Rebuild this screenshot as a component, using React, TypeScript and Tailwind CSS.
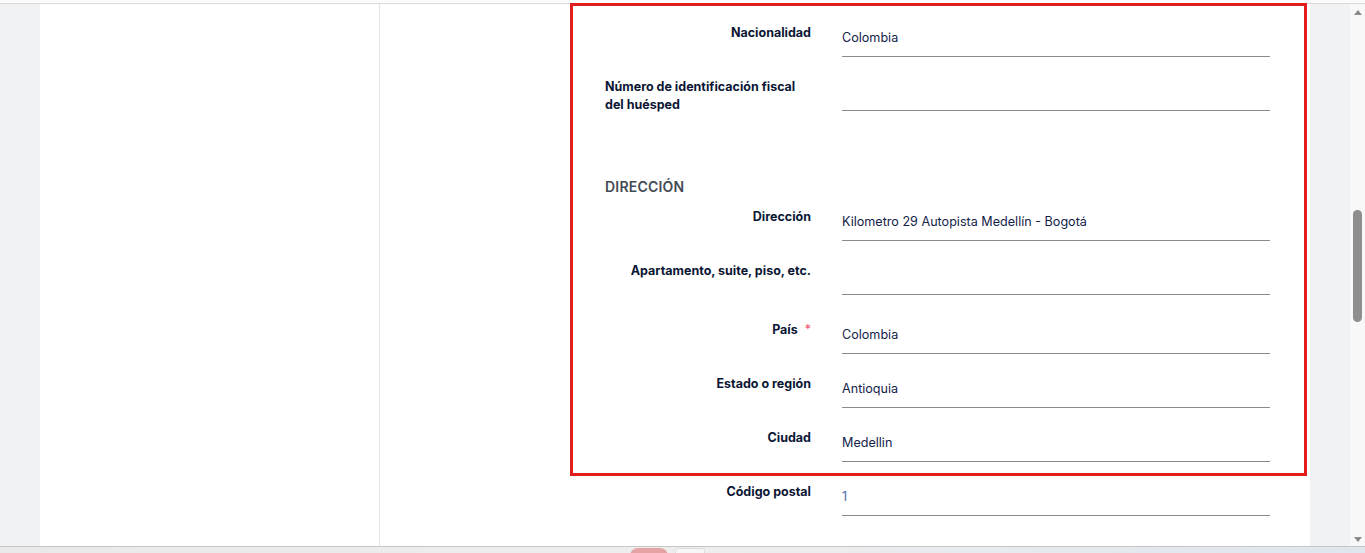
import React from "react";

const labelCls =
  "w-[206px] shrink-0 text-right text-[12.5px] leading-[18px] font-bold text-[#0b1635] pt-[3px]";
const inputCls =
  "w-[428px] h-[36px] border-b border-[#8a8a8a] flex items-center text-[12.6px] text-[#14234a]";

function Row({
  label,
  value,
  required,
  mb = "mb-[18px]",
  valueCls = "",
}: {
  label: React.ReactNode;
  value?: string;
  required?: boolean;
  mb?: string;
  valueCls?: string;
}) {
  return (
    <div className={`flex items-start gap-[31px] ${mb}`}>
      <div className={labelCls}>
        {label}
        {required && <span className="text-[#f0506e] font-normal ml-[7px]">*</span>}
      </div>
      <div className={inputCls}>
        <span className={valueCls}>{value}</span>
      </div>
    </div>
  );
}

export default function App() {
  return (
    <div
      className="relative w-[1365px] h-[553px] overflow-hidden bg-white flex flex-col"
      style={{ fontFamily: "Inter, 'Noto Sans', sans-serif" }}
    >
      <div className="h-[3px] bg-[#fbfbfb] shrink-0" />
      <div className="h-px bg-[#dcdcdc] shrink-0" />
      <div className="flex flex-1 min-h-0">
        <div className="w-[40px] bg-[#f1f2f4] shrink-0" />
        <div className="w-[340px] border-r border-[#e3e3e3] shrink-0" />
        <div className="w-[930px] shrink-0 pl-[225px] pt-[17px]">
          <Row label="Nacionalidad" value="Colombia" />
          <Row
            label={
              <span className="block text-left">
                Número de identificación fiscal
                <br />
                del huésped
              </span>
            }
            value=""
            mb="mb-[15px]"
          />
          <div className="mt-[63px] mb-[8px] text-[14px] leading-[20px] font-semibold text-[#444a55] tracking-[0.2px]">
            DIRECCIÓN
          </div>
          <Row label="Dirección" value="Kilometro 29 Autopista Medellín - Bogotá" />
          <Row label="Apartamento, suite, piso, etc." value="" mb="mb-[23px]" />
          <Row label="País" value="Colombia" required />
          <Row label="Estado o región" value="Antioquia" />
          <Row label="Ciudad" value="Medellin" />
          <Row label="Código postal" value="1" valueCls="text-[#4a6aa8]" />
        </div>
        <div className="w-[40px] bg-[#f1f2f4] shrink-0" />
        <div className="w-[15px] bg-[#f8f8f8] shrink-0 relative flex flex-col items-center">
          <div className="mt-[6px] w-0 h-0 border-l-[4px] border-r-[4px] border-b-[5px] border-l-transparent border-r-transparent border-b-[#8a8a8a]" />
          <div className="mt-[195px] w-[9px] h-[112px] rounded-full bg-[#8e8e8e]" />
          <div className="mt-auto mb-[4px] w-0 h-0 border-l-[4px] border-r-[4px] border-t-[5px] border-l-transparent border-r-transparent border-t-[#8a8a8a]" />
        </div>
      </div>
      <div className="h-px bg-[#c6c6c6] shrink-0" />
      <div className="h-[6px] shrink-0 bg-gradient-to-r from-[#e9e9e9] via-[#eeeeee] to-[#dfe6ee] relative">
        <div className="absolute left-[630px] top-[1px] w-[38px] h-[8px] rounded-t-[8px] bg-[#e6a3a3]" />
        <div className="absolute left-[675px] top-[1px] w-[30px] h-[8px] rounded-t-[3px] bg-[#f7f7f7] border border-[#dddddd]" />
      </div>
      {/* red annotation box */}
      <div className="absolute left-[570px] top-[3px] w-[737px] h-[473px] border-[3px] border-[#e21d1d] pointer-events-none" />
    </div>
  );
}
